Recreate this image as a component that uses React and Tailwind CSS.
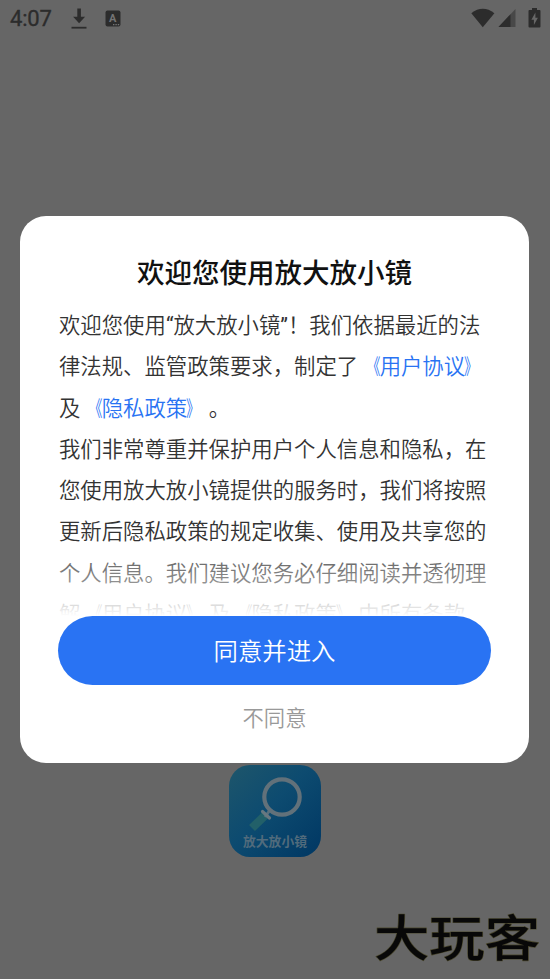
const Title = ({ children }) => (
  <>
    <span className="inline-block origin-right translate-x-px scale-x-[0.65]">《</span>
    {children}
    <span className="inline-block origin-left -translate-x-px scale-x-[0.65]">》</span>
  </>
)

const Link = ({ children }) => (
  <span className="text-[#2973f3]">
    <Title>{children}</Title>
  </span>
)

const StatusBar = () => (
  <header className="flex h-[38px] shrink-0 items-center justify-between pl-[9px] pr-[9px] text-[#2c2c2c]">
    <div className="flex items-center">
      <span className="w-[43px] pl-px text-[22px] leading-[38px] tracking-[-0.2px] [-webkit-text-stroke:0.35px]">4:07</span>
      <svg className="ml-[19px] h-[22px] w-[16px]" viewBox="0 0 16 22">
        <path d="M6.3 0.5h3.6v8.3h4.2L8.1 15.2 2.1 8.8h4.2z" fill="currentColor" />
        <path d="M0.5 19.7h15" stroke="currentColor" strokeWidth="1.8" />
      </svg>
      <svg className="relative -top-px ml-[18px] h-[17px] w-[16px]" viewBox="0 0 16 17">
        <rect x="0.5" y="0.5" width="15" height="16" rx="2" fill="currentColor" />
        <text x="7.7" y="12" textAnchor="middle" fontSize="11" fontWeight="700" fill="#747474">A</text>
        <path d="M8 14.6h1.4M10.4 14.6h1.4M12.8 14.6h1.4" stroke="#747474" strokeWidth="1.2" />
      </svg>
    </div>
    <div className="relative -top-px flex items-center">
      <svg className="h-[20px] w-[24px]" viewBox="0 0 24 20">
        <path d="M0.3 5.2Q11.8-3.6 23.4 5.2L11.8 19.2z" fill="currentColor" />
      </svg>
      <svg className="ml-[3px] h-[18px] w-[18px]" viewBox="0 0 18 18">
        <path d="M0.5 18L17.5 0V18z" fill="#484848" />
        <path d="M0.5 18L12.5 5.3V18z" fill="currentColor" />
      </svg>
      <svg className="ml-[12px] h-[20px] w-[13px]" viewBox="0 0 13 20">
        <path d="M4 0h5v2h2.5Q12.5 2 12.5 3v15.5q0 1-1 1h-10q-1 0-1-1V3q0-1 1-1H4z" fill="currentColor" />
        <path d="M7.4 4.6L3.4 11.8h2.5v5.2l4-7.3H7.4z" fill="#676767" />
      </svg>
    </div>
  </header>
)

const AppLogo = () => (
  <svg className="h-[92px] w-[92px]" viewBox="0 0 92 92">
    <defs>
      <linearGradient id="logo-bg" x1="0" y1="0" x2="1" y2="1">
        <stop offset="0" stopColor="#1e566b" />
        <stop offset="0.45" stopColor="#0d4b70" />
        <stop offset="1" stopColor="#003763" />
      </linearGradient>
    </defs>
    <rect width="92" height="92" rx="21" fill="url(#logo-bg)" />
    <path d="M37.5 49L23 63" stroke="#226069" strokeWidth="8.5" />
    <path d="M36 52L41 45" stroke="#59707d" strokeWidth="3" />
    <circle cx="53" cy="32" r="17.7" fill="none" stroke="#62717a" strokeWidth="4.2" />
    <path d="M33.5 46.5L40.5 53" stroke="#687880" strokeWidth="3.2" strokeLinecap="round" />
    <text x="14" y="81" textLength="64" fontSize="12.8" fontWeight="700" fill="#516b7c">
      放大放小镜
    </text>
  </svg>
)

const ConsentDialog = () => (
  <div
    role="dialog"
    className="absolute left-[20px] top-[216px] flex h-[547px] w-[509px] flex-col rounded-[26px] bg-white px-[38px] pt-[38px]"
  >
    <h1 className="text-center text-[27.5px] font-medium leading-[40px] text-[#111]">欢迎您使用放大放小镜</h1>
    <div className="relative mt-[11px] h-[311px] shrink-0 overflow-hidden whitespace-nowrap pl-px text-[21.38px] font-[350] leading-[41.3px] text-[#333] [text-spacing-trim:space-all]">
      <p>
        欢迎您使用<span className="font-normal">“</span>放大放小镜
        <span className="font-normal">”</span>！我们依据最近的法
        <br />
        律法规、监管政策要求，制定了<Link>用户协议</Link>
        <br />
        及<Link>隐私政策</Link>。
      </p>
      <p>
        我们非常尊重并保护用户个人信息和隐私，在
        <br />
        您使用放大放小镜提供的服务时，我们将按照
        <br />
        更新后隐私政策的规定收集、使用及共享您的
        <br />
        个人信息。我们建议您务必仔细阅读并透彻理
        <br />
        解<Title>用户协议</Title>及<Title>隐私政策</Title>中所有条款。
      </p>
      <div className="absolute inset-x-0 bottom-0 h-[69px] bg-linear-to-b from-white/15 via-white/45 to-white" />
    </div>
    <button className="h-[69px] shrink-0 rounded-full bg-[#2973f3] pt-[3px] text-[24.4px] font-[350] text-white">
      同意并进入
    </button>
    <button className="mt-[18px] self-center text-[21.3px] font-[350] leading-[32px] text-[#999]">不同意</button>
  </div>
)

export default function App() {
  return (
    <div
      lang="zh-CN"
      className="relative flex h-[979px] w-[550px] flex-col overflow-hidden bg-[#666] font-[Roboto,'Noto_Sans_CJK_SC',sans-serif]"
    >
      <StatusBar />
      <main className="flex flex-1 flex-col items-center justify-end pb-[42px]">
        <AppLogo />
      </main>
      <footer className="flex h-[80px] shrink-0 justify-end pr-[9px]">
        <svg className="h-[80px] w-[168px]" viewBox="0 0 168 80">
          <text
            x="1"
            y="57"
            textLength="166"
            lengthAdjust="spacingAndGlyphs"
            fontSize="49"
            fontWeight="500"
            fill="#080808"
            stroke="#4d4a30"
            strokeWidth="1.2"
            strokeLinejoin="round"
            paintOrder="stroke"
          >
            大玩客
          </text>
        </svg>
      </footer>
      <ConsentDialog />
    </div>
  )
}
